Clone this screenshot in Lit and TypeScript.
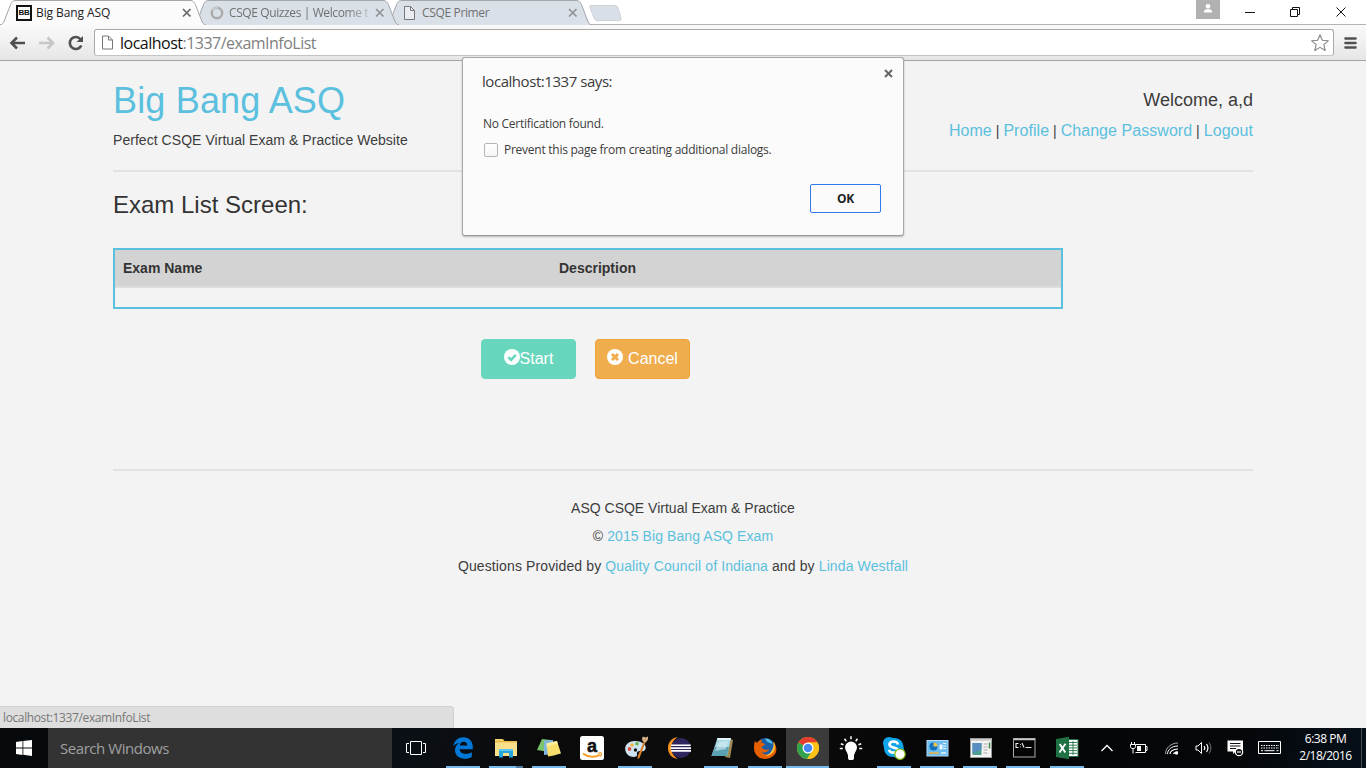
import { LitElement, html, svg, css } from "lit";
import { customElement } from "lit/decorators.js";
import { classMap } from "lit/directives/class-map.js";

const UI = css`"Open Sans", "Noto Sans", sans-serif`;

const TAB_PATH =
  "M0 25 C3 24.5 4 22 5 19 L10 6 C11.500 2 12.500 .5 16 .5 H190 C193 .5 194.500 2 196 6 L201 19 C202 22 203 24.500 206 25";

const docIcon = svg`<path d="M1.500 .5h6l4 4v9h-10z" fill="#fff" fill-opacity=".4" stroke="#777"/><path d="M7.500 .5v4h4" fill="none" stroke="#777"/>`;

const tabs = [
  {
    title: "Big Bang ASQ",
    cls: "t-active",
    icon: html`<span class="bb">BB</span>`,
  },
  {
    title: "CSQE Quizzes | Welcome t",
    cls: "t-second",
    icon: html`<svg width="16" height="16" viewBox="0 0 16 16"><circle cx="8" cy="8" r="5.200" fill="none" stroke="#aaa" stroke-width="2.400"/><path d="M3.500 5.500A5.200 5.200 0 0 1 9 2.900" fill="none" stroke="#d0d0d0" stroke-width="1.400"/></svg>`,
  },
  {
    title: "CSQE Primer",
    cls: "t-third",
    icon: html`<svg width="14" height="14" viewBox="0 0 14 14">${docIcon}</svg>`,
  },
];

const edge = svg`<path d="M2.200 10.500C3 4.500 7.300 1.200 12.200 1.200c6 0 9.600 4.200 9.600 9.800v2.300H8.600c.3 3 2.600 4.600 6 4.600 2.300 0 4.400-.6 6.200-1.700v4.700c-2.100 1.200-4.500 1.800-7.100 1.800C7.700 22.700 4 19 4 14.200c0-3.300 1.800-6 4.700-7.500C5.800 7 3.600 8.300 2.200 10.500zM8.800 9.600h7.400c0-2.400-1.200-3.800-3.500-3.800-2.200 0-3.600 1.500-3.900 3.800z" fill="#0078d7"/>`;
const folder = svg`<path d="M1 3h8l1.500 2H23v15H1z" fill="#e9bd4e"/><path d="M1 6.500h22V20H1z" fill="#fbe08c"/><path d="M1 3h7l1 1.500H1z" fill="#f7d573"/><path d="M5 21.500V13h14v8.500h-4V17H9v4.500z" fill="#26a4e0"/><path d="M5 13h14v2H5z" fill="#5cc6f2"/>`;
const sticky = svg`<path d="M5 3l9 1-2 12L0 14z" fill="#79c46b"/><path d="M7 4.500l9-.5 1 14-10 1z" fill="#7fb6e0"/><path d="M9.500 7.500l10.500-2.500 4 12.500c-4 1-8.500 2.500-13 3z" fill="#f6e06b"/><path d="M9.500 7.500l10.500-2.500 .7 2.500-10.900 3z" fill="#fff0a0"/>`;
const amazon = svg`<rect width="24" height="24" rx="2.500" fill="#fff"/><text class="glyph-a" x="12" y="16" text-anchor="middle">a</text><path d="M3 17.500c5 4 12 4.200 17 1.200" fill="none" stroke="#f79a1e" stroke-width="1.800"/><path d="M17.500 17.300c2-.6 3.700-.5 4 0 .2.600-.3 2.300-1.400 3.400" fill="none" stroke="#f79a1e" stroke-width="1.200"/>`;
const paint = svg`<path d="M11 5C4 5 0 9.500 1.500 15 2.800 19.800 8 22 12 20.500c2.500-1-.5-3.500 2-5 2.500-1.300 5 1 7-1.500C24 10 18.500 5 11 5z" fill="#cfe4f3"/><circle cx="5.500" cy="13" r="1.900" fill="#e0503a"/><circle cx="8" cy="9" r="1.800" fill="#efb431"/><circle cx="13" cy="7.800" r="1.800" fill="#61b54c"/><circle cx="11.500" cy="14" r="1.700" fill="#111"/><path d="M20 5l1.500 1-6 16-2 1 .3-3z" fill="#d9822b"/><path d="M19 5.500c-1.500-2-1-4 0-5l2.500 1L24 .5c.5 3-1 5-2.500 6z" fill="#d6b083"/>`;
const eclipse = svg`<path d="M11 1C4.500 1.500 1 6.500 1 12s3.500 10.500 10 11C6.500 20.500 4.500 16.500 4.500 12S6.500 3.500 11 1z" fill="#f7941e"/><circle cx="14" cy="12" r="10" fill="#30265f"/><path d="M4.200 8.500h19.500v1.600H4zM3.500 11.300H24v1.600H3.500zM4 14.100h20v1.600H4.200z" fill="#fff"/>`;
const notepad = svg`<path d="M20 3l3 1-3 18-5-1z" fill="#a08b56"/><path d="M7.500 2H21l-4 18H1.500z" fill="#a8d9e4"/><path d="M5 11h14l-2 9H1.500z" fill="#5ba3b4"/><path d="M7.500 2H21l-.5 2H7z" fill="#e6f6f8"/><path d="M9 6l9-1-2 8-11 2z" fill="#d8eff3" opacity=".6"/>`;
const firefox = svg`<circle cx="12.500" cy="11.500" r="9.500" fill="#1b5fa8"/><path d="M12 3c4-1 7 2 7.500 5l-5-2z" fill="#55c0e8"/><path d="M2 5l2 2c1-2 3-3 5-3.500L8.500 7c2 0 3 .5 3.500 1.500-1.500 1.500-3 1.500-3.500 3 2 2 5 3 8 1.500-2 4-7 4-8 3 3 4 10 3 12-2 1-3 .5-6-.5-8.500 3 3 4 7 3 10.500C21.500 20 17 23 12 23 6 23 1 18.500 1 12c0-2.500.3-5 1-7z" fill="#e66000"/><path d="M21 6c3 8-2 14-9 13.500 5 1 10-5 9-13.500z" fill="#ffb52e"/><path d="M20.500 5c3.500 8-1 15-8 15 5-2 9-7 8-15z" fill="#ffc640"/>`;
const chrome = svg`<circle cx="12" cy="12" r="11" fill="#fbc116"/><path d="M12 12L2.500 6.500A11 11 0 0 1 21.500 6.500H12z" fill="#e33b2e"/><path d="M2.500 6.500A11 11 0 0 0 11 23l5.500-8.500L12 12z" fill="#31a350"/><path d="M12 6.500h9.500A11 11 0 0 1 11 23l5.800-8.500z" fill="#fbc116"/><circle cx="12" cy="12" r="5.500" fill="#fff"/><circle cx="12" cy="12" r="4.300" fill="#4587f3"/>`;
const bulb = svg`<path d="M12 5.500a6 6 0 0 1 6 6c0 3-2.500 4.500-2.500 7h-7c0-2.500-2.500-4-2.500-7a6 6 0 0 1 6-6zM9 18.200h6v4.300l-1 1.500h-4l-1-1.500z" fill="#fff"/><g stroke="#fff" stroke-width="1.500"><path d="M12 .3v3M5.500 2.800l1.800 2.400M18.500 2.800l-1.800 2.400M1.800 7.800l2.700 1M22.200 7.800l-2.700 1M.8 12.500h3M20.200 12.500h3"/></g>`;
const skype = svg`<path d="M7 1c2 0 3 .8 4.500 1C17 1.500 21.500 5.500 21.500 11c0 2 1 3 1 5A6 6 0 0 1 16 22c-2 0-3-.8-4.500-1C6 21.500 2 17 2 12c0-2-1-3-1-5a6 6 0 0 1 6-6z" fill="#10a5e9"/><path d="M16 8.500C15.500 6.500 13.800 5.500 11.500 5.500S7.500 6.800 7.500 8.600C7.500 12.500 15.500 10.800 15.500 14c0 1.600-1.800 2.700-4 2.700s-4-.9-4.500-3" fill="none" stroke="#fff" stroke-width="2.700"/><circle cx="18" cy="18.200" r="5.200" fill="#fff" stroke="#7fba00" stroke-width="1.200"/>`;
const control = svg`<rect x="1" y="4.500" width="21" height="15.500" fill="#6cbcf0" stroke="#b7dcf5"/><circle cx="7.500" cy="10.500" r="4" fill="#1272be"/><path d="M7.500 10.500V6.500a4 4 0 0 1 4 4z" fill="#f4c542"/><path d="M14 9h2v4h-2zM17 7.500h3M17 10h3M17 12.500h3" stroke="#e8f4fd" fill="#fff"/><path d="M3 17h10" stroke="#f4b042" stroke-width="1.500"/><path d="M15 17h5" stroke="#e8f4fd" stroke-width="1.500"/>`;
const windowIcon = svg`<rect x="1.500" y="2.500" width="21" height="19" fill="#f3f3f3" stroke="#9a9a9a"/><path d="M1.500 3h21v1.800h-21z" fill="#ccc"/><rect x="3.500" y="7" width="9" height="12" fill="#4d9f90"/><path d="M3.500 7h9v6c-3 3-6 1-9 5z" fill="#568fc0"/><path d="M14.500 8h4M14.500 11h4M14.500 14h4M14.500 17h4" stroke="#aaa"/><path d="M20.500 6.500v6" stroke="#3f8b46" stroke-width="1.500"/>`;
const cmd = svg`<rect x="1.500" y="2.500" width="21.500" height="18.500" fill="#050505" stroke="#a9a9a9"/><path d="M2 3.500h21" stroke="#c8c8c8" stroke-width="1.500"/><path d="M6.500 7.500h-2.500v4h2.500M8.500 8v.8M8.500 10.500v.8M10 7l2 4.500M13.500 11.500h6" fill="none" stroke="#eee" stroke-width="1.100"/>`;
const excel = svg`<rect x="12" y="3.500" width="11" height="17" fill="#fff" stroke="#207245"/><path d="M14 6.500h8M14 9.200h8M14 11.900h8M14 14.600h8M14 17.300h8M18 5v14" stroke="#207245" stroke-width=".9"/><path d="M1 3l13-2.300v22.600L1 21z" fill="#1f7244"/><path d="M4.700 8l5.600 8.500M10.500 7.700L4.500 16.500" stroke="#fff" stroke-width="1.900"/>`;

const apps = [
  { icon: edge, open: true },
  { icon: folder, open: true, stacked: true },
  { icon: sticky, open: true },
  { icon: amazon },
  { icon: paint, open: true },
  { icon: eclipse },
  { icon: notepad, open: true },
  { icon: firefox, open: true },
  { icon: chrome, open: true, active: true },
  { icon: bulb },
  { icon: skype, open: true },
  { icon: control, open: true },
  { icon: windowIcon, open: true },
  { icon: cmd, open: true },
  { icon: excel, open: true },
];

@customElement("browser-chrome")
class BrowserChrome extends LitElement {
  static styles = css`
    :host { display: block; height: 61px; font-family: ${UI}; }
    svg { display: block; flex: none; }
    .strip { display: flex; height: 25px; background: #fff; justify-content: space-between; }
    .tabs { display: flex; isolation: isolate; }
    .tab { display: grid; width: 206px; height: 25px; margin-right: -13px; }
    .tab > * { grid-area: 1 / 1; }
    .t-active { z-index: 3; }
    .t-second { z-index: 2; }
    .t-third { z-index: 1; }
    .face { display: flex; align-items: center; height: 25px; box-sizing: border-box; padding: 0 14px 0 16px; font-size: 12px; color: #707070; }
    .t-active .face { color: #222; }
    .ico { width: 20px; flex: none; }
    .t-third .ico { padding-left: 1px; width: 19px; }
    .title { flex: 1; white-space: nowrap; letter-spacing: -.35px; }
    .t-active .title { letter-spacing: -.1px; }
    .t-second .title { letter-spacing: -.39px; -webkit-mask-image: linear-gradient(90deg, #000 118px, transparent 146px); }
    .bb { display: flex; width: 12px; height: 12px; border: 2px solid #111; align-items: center; justify-content: center; font: bold 8px/12px "Liberation Sans", sans-serif; letter-spacing: -.3px; color: #111; }
    .new { margin: 5px 0 0 9px; }
    .controls { display: flex; height: 25px; }
    .user { width: 24px; height: 19px; background: #b1b1b1; margin-right: 19px; }
    .bar { display: flex; align-items: center; height: 37px; box-sizing: border-box; border-top: 1px solid #b4b4b4; border-bottom: 1px solid #a5a5a5; background: linear-gradient(#fafafa, #e6e6e6); margin-top: -1px; }
    .omni { display: flex; align-items: center; width: 1240px; height: 27px; box-sizing: border-box; border: 1px solid #a9a9a9; border-bottom-color: #c4c4c4; border-radius: 3px; background: #fff; padding: 0 4px 0 6px; }
    .url { flex: 1; font-size: 16px; color: #808080; margin-left: 6px; letter-spacing: -.51px; line-height: 24px; }
    .host { color: #111; }
    .nav { width: 94px; flex: none; }
    .menu { margin-left: 9px; }
  `;

  render() {
    return html`
      <div class="strip">
        <div class="tabs">
          ${tabs.map(
            (t, i) => html`<div class="tab ${t.cls}">
              <svg width="206" height="25" viewBox="0 0 206 25"><path d=${TAB_PATH} fill=${i ? "#dae0e8" : "#fbfbfb"} stroke="#a3a6aa" /></svg>
              <div class="face">
                <span class="ico">${t.icon}</span><span class="title">${t.title}</span>
                <svg width="10" height="10" viewBox="0 0 10 10"><path d="M1 1l7.500 7.500M8.500 1L1 8.500" stroke=${i ? "#8f9398" : "#666"} stroke-width="1.700" /></svg>
              </div>
            </div>`
          )}
          <svg class="new" width="34" height="17" viewBox="0 0 34 17"><path d="M3 .5h24c1.500 0 2.300.5 3 2l3 10.500c.5 1.800 0 2.500-1.500 2.500H9c-1.500 0-2.300-.8-3-2.500L2 2.500C1.500 1 2 .5 3 .5z" fill="#d9dfe7" stroke="#cfd3d9" /></svg>
        </div>
        <div class="controls">
          <div class="user"><svg width="24" height="19" viewBox="0 0 24 19"><circle cx="12" cy="6.300" r="2.300" fill="#fff" /><path d="M8 12.500V11c0-1.300 2.500-2 4-2s4 .7 4 2v1.500z" fill="#fff" /></svg></div>
          <svg width="127" height="25" viewBox="0 0 127 25" fill="none" stroke="#111">
            <path d="M6 12.500h10M51.500 9.500h7v7h-7zM53.500 9.500v-2h7v7h-2M97.500 7.500l9 9M106.500 7.500l-9 9" />
          </svg>
        </div>
      </div>
      <div class="bar">
        <div class="nav">
          <svg width="94" height="24" viewBox="0 0 94 24" fill="none" stroke-width="2.600">
            <path d="M25 12H12M17 6.500L11.500 12l5.500 5.500" stroke="#505050" />
            <path d="M39 12h13M47.500 6.500L53 12l-5.500 5.500" stroke="#c6c6c6" />
            <path d="M80.500 8.200A6 6 0 1 0 81.300 14.500" stroke="#505050" /><path d="M83 5v6h-6.500z" fill="#505050" stroke="none" />
          </svg>
        </div>
        <div class="omni">
          <svg width="13" height="15" viewBox="0 0 13 14">${docIcon}</svg>
          <span class="url"><span class="host">localhost</span>:1337/examInfoList</span>
          <svg width="18" height="18" viewBox="0 0 18 18"><path d="M9 .8l2.300 5.500 6 .5-4.500 3.900 1.400 5.800L9 13.400l-5.200 3.100 1.400-5.800L.7 6.800l6-.5z" fill="#fff" stroke="#858585" stroke-width="1.100" stroke-linejoin="round" /></svg>
        </div>
        <svg class="menu" width="15" height="14" viewBox="0 0 15 14"><path d="M2.500 2.500h10M2.500 7h10M2.500 11.500h10" stroke="#505050" stroke-width="2.600" stroke-linecap="round" /></svg>
      </div>
    `;
  }
}

@customElement("exam-page")
class ExamPage extends LitElement {
  static styles = css`
    :host { display: block; width: 1140px; margin: 0 auto; padding-top: 20px; font: 14px/20px "Liberation Sans", Arial, sans-serif; color: #3c3c3c; }
    a { color: #5bc0de; }
    .top { display: flex; justify-content: space-between; height: 89px; }
    h1 { margin: 0 0 9px; font-weight: 400; font-size: 36px; line-height: 40px; color: #5bc0de; letter-spacing: .17px; }
    p { margin: 0; }
    .sub { letter-spacing: .045px; }
    .right { padding-top: 9px; text-align: right; }
    .welcome { font-size: 18px; margin-bottom: 11px; }
    .links { letter-spacing: .05px; }
    .right a { font-size: 16px; }
    .rule { height: 2px; background: #e2e2e2; }
    h3 { margin: 20px 0 30px; font-weight: 400; font-size: 24px; line-height: 26px; color: #333; }
    .table { width: 950px; height: 61px; box-sizing: border-box; border: 2px solid #5bc0de; }
    .head { display: grid; grid-template-columns: 436px 1fr; height: 36px; line-height: 36px; background: #d3d3d3; border-bottom: 2px solid #ddd; font-weight: 700; color: #333; }
    .head span { padding-left: 8px; }
    .actions { display: flex; gap: 19px; margin: 30px 0 90px 368px; }
    .btn { display: flex; align-items: center; justify-content: center; width: 95px; height: 40px; box-sizing: border-box; border: 1px solid #68d6bc; border-radius: 4px; background: #68d6bc; color: #fff; font-size: 16px; }
    .warn { border-color: #eea236; background: #f0ad4e; gap: 5px; }
    .btn svg { margin-top: -4px; }
    .foot { padding-top: 27px; text-align: center; }
    .foot p { margin-bottom: 8px; }
    .foot p + p { margin-bottom: 10px; letter-spacing: .08px; }
    .foot p + p + p { letter-spacing: .12px; }
  `;

  render() {
    return html`
      <div class="top">
        <div><h1>Big Bang ASQ</h1><p class="sub">Perfect CSQE Virtual Exam &amp; Practice Website</p></div>
        <div class="right">
          <p class="welcome">Welcome, a,d</p>
          <p class="links"><a>Home</a> | <a>Profile</a> | <a>Change Password</a> | <a>Logout</a></p>
        </div>
      </div>
      <div class="rule"></div>
      <h3>Exam List Screen:</h3>
      <div class="table"><div class="head"><span>Exam Name</span><span>Description</span></div></div>
      <div class="actions">
        <div class="btn"><svg width="16" height="16" viewBox="0 0 16 16"><circle cx="8" cy="8" r="8" fill="#fff" /><path d="M4.300 8.200l2.700 2.700 4.800-5" fill="none" stroke="#68d6bc" stroke-width="2.500" /></svg>Start</div>
        <div class="btn warn"><svg width="16" height="16" viewBox="0 0 16 16"><circle cx="8" cy="8" r="8" fill="#fff" /><path d="M5 5l6 6M11 5l-6 6" stroke="#f0ad4e" stroke-width="3" /></svg>Cancel</div>
      </div>
      <div class="rule"></div>
      <div class="foot">
        <p>ASQ CSQE Virtual Exam &amp; Practice</p>
        <p>© <a>2015 Big Bang ASQ Exam</a></p>
        <p>Questions Provided by <a>Quality Council of Indiana</a> and by <a>Linda Westfall</a></p>
      </div>
    `;
  }
}

@customElement("alert-dialog")
class AlertDialog extends LitElement {
  static styles = css`
    :host { display: block; width: 442px; height: 179px; box-sizing: border-box; border: 1px solid #a8a8a8; border-bottom-color: #999; border-radius: 3px; background: #fbfbfb; box-shadow: 0 1px 2px rgba(0, 0, 0, .25); font: 12px/16px ${UI}; color: #3c3c3c; padding: 13px 22px 0 20px; }
    .head { display: flex; justify-content: space-between; }
    .title { font-size: 15px; line-height: 20px; letter-spacing: -.45px; margin-left: -1px; }
    .close { margin: -5px -18px 0 0; }
    .msg { margin-top: 25px; letter-spacing: -.27px; }
    .check { display: flex; align-items: center; margin-top: 10px; letter-spacing: -.26px; }
    .box { width: 12px; height: 12px; border: 1px solid #b5b5b5; border-radius: 2px; margin: 0 6px 0 1px; background: linear-gradient(#fff, #f6f6f6); }
    .ok { margin: 26px 0 0 auto; width: 71px; height: 29px; box-sizing: border-box; border: 1px solid #3079ed; border-radius: 2px; text-align: center; line-height: 27px; font-weight: 700; color: #222; letter-spacing: -.3px; }
  `;

  render() {
    return html`
      <div class="head">
        <span class="title">localhost:1337 says:</span>
        <svg class="close" width="20" height="20" viewBox="0 0 20 20"><path d="M6 4l7 7M13 4l-7 7" stroke="#666" stroke-width="2" /></svg>
      </div>
      <div class="msg">No Certification found.</div>
      <div class="check"><span class="box"></span>Prevent this page from creating additional dialogs.</div>
      <div class="ok">OK</div>
    `;
  }
}

@customElement("task-bar")
class TaskBar extends LitElement {
  static styles = css`
    :host { display: flex; height: 40px; background: linear-gradient(100deg, #070a0c, #0b1016 30%, #0a0a0a 40%, #0d0d0d 55%, #050505 70%, #050709 90%, #06101a); font-family: ${UI}; color: #fff; }
    svg { display: block; }
    .start { display: grid; place-items: center; width: 48px; }
    .search { width: 344px; box-sizing: border-box; padding-left: 12px; background: #333; color: #a0a0a0; font-size: 15px; line-height: 40px; letter-spacing: -.45px; }
    .view { display: grid; place-items: center; width: 49px; box-sizing: border-box; padding-right: 2px; }
    .apps { display: flex; width: 647px; }
    .app { display: flex; flex-direction: column; justify-content: space-between; align-items: center; flex: 1; padding-top: 8px; }
    .app svg { margin-left: 1px; }
    .active { background: #3b3b3b; }
    .line { width: 34px; height: 2px; }
    .open .line { background: #76b9ed; }
    .stacked .line { background: linear-gradient(90deg, #76b9ed 27px, #4c7ba4 27px); }
    .active .line { width: 100%; }
    .glyph-a { font: bold 18px/1 "Liberation Sans", sans-serif; fill: #111; stroke: #111; stroke-width: .5px; }
    .tray { display: grid; grid-template-columns: 32px 32px 33px 31px 32px 38px 73px; align-items: center; justify-items: center; padding-left: 3px; }
    .clock { font-size: 12px; line-height: 17px; text-align: center; letter-spacing: -.5px; margin-top: -2px; }
    .desk { width: 1px; background: #4a4f54; margin-left: -1px; }
  `;

  render() {
    return html`
      <div class="start"><svg width="16" height="16" viewBox="0 0 16 16"><path d="M0 2l6.500-.9v6.500H0zM7.300 1L16 0v7.600H7.300zM0 8.400h6.500v6.500L0 14zM7.300 8.400H16V16l-8.700-1.200z" fill="#fff" /></svg></div>
      <div class="search">Search Windows</div>
      <div class="view"><svg width="20" height="16" viewBox="0 0 20 16"><path d="M4.500 1.500h11v13h-11zM3 3.500H.5v9H3M17 3.500h2.500v9H17" fill="none" stroke="#fff" /></svg></div>
      <div class="apps">
        ${apps.map(
          (a) => html`<div class=${classMap({ app: true, open: !!a.open, active: !!a.active, stacked: !!a.stacked })}>
            <svg width="24" height="24" viewBox="0 0 24 24">${a.icon}</svg><span class="line"></span>
          </div>`
        )}
      </div>
      <div class="tray">
        <svg width="14" height="10" viewBox="0 0 14 10"><path d="M1.500 8L7 2.500 12.500 8" fill="none" stroke="#fff" stroke-width="1.300" /></svg>
        <svg width="18" height="14" viewBox="0 0 18 14" fill="none" stroke="#fff"><path d="M5.500 3.500h10v8h-10M15.500 5.500h1.500v4h-1.500" /><path d="M7 5h4v5H7z" fill="#fff" stroke="none" /><path d="M1.500 1v2M4.500 1v2M.5 3.500h5v2c0 1.500-1 2-2.500 2s-2.500-.5-2.500-2zM3 8v4.500" /></svg>
        <svg width="14" height="14" viewBox="0 0 14 14" fill="none" stroke="#fff"><path d="M5 13c0-2 2-4.500 8-5M8.500 13c.5-1 1.500-2 4.500-2" stroke-width="1.200" /><path d="M2.500 13c0-4 4-8 10.500-8" /><path d="M.5 13C.5 7 6 2 13 2" stroke="#aaa" /><circle cx="11.500" cy="12" r="1.700" fill="#fff" stroke="none" /></svg>
        <svg width="18" height="14" viewBox="0 0 18 14" fill="none" stroke="#fff"><path d="M1 5h2l3.500-3.500v11L3 9H1z" /><path d="M9 5c.8 1 .8 3 0 4M11.500 3c1.800 2.500 1.800 5.500 0 8" stroke-width="1.200" /><path d="M14 1.500c2.500 3.500 2.500 7.500 0 11" stroke="#777" /></svg>
        <svg width="17" height="17" viewBox="0 0 17 17"><path d="M.5.500H16V11H9L6 14v-2.500H.5z" fill="#fff" /><path d="M3 3.500h10.500M3 6h10.500M3 8.500h6" stroke="#111" /><circle cx="12" cy="12" r="3.700" fill="#111" stroke="#fff" stroke-width="1.200" /><path d="M10 12h4" stroke="#fff" stroke-width="1.200" /></svg>
        <svg width="24" height="14" viewBox="0 0 24 14" fill="none" stroke="#fff"><path d="M.5.500h22v12H.5z" /><path d="M3 4.500h18M3 7h18" stroke-dasharray="1.500 1" /><path d="M3 9.700h2M6.500 9.700h10M18.500 9.700h2" /></svg>
        <div class="clock">6:38 PM<br />2/18/2016</div>
      </div>
      <span class="desk"></span>
    `;
  }
}

@customElement("app-root")
class AppRoot extends LitElement {
  static styles = css`
    :host { display: flex; flex-direction: column; position: relative; width: 1366px; height: 768px; overflow: hidden; background: #f3f3f3; }
    .page { flex: 1; }
    .dialog { position: absolute; left: 462px; top: 57px; }
    .status { width: 454px; height: 22px; box-sizing: border-box; padding-left: 3px; background: #dedede; border: solid #d0d0d0; border-width: 1px 1px 0 0; border-top-right-radius: 4px; font: 12px/22px ${UI}; letter-spacing: -.38px; color: #777; }
  `;

  render() {
    return html`
      <browser-chrome></browser-chrome>
      <div class="page"><exam-page></exam-page></div>
      <div class="status">localhost:1337/examInfoList</div>
      <task-bar></task-bar>
      <alert-dialog class="dialog"></alert-dialog>
    `;
  }
}
